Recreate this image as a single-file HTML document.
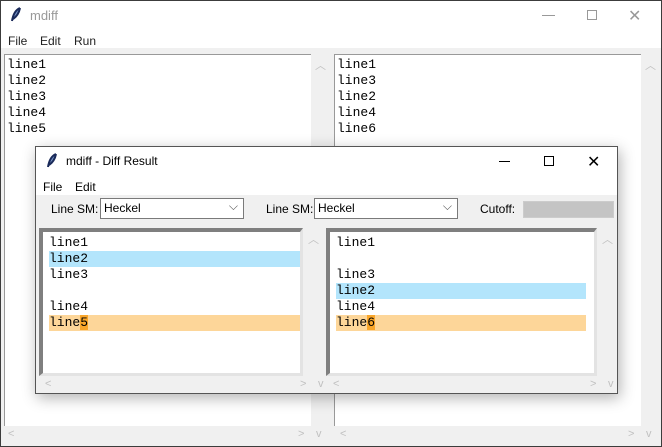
<!DOCTYPE html>
<html><head><style>
*{margin:0;padding:0;box-sizing:border-box}
body{width:662px;height:447px;overflow:hidden;background:#f0f0f0;font-family:"Liberation Sans",sans-serif;font-size:12px;position:relative}
.a{position:absolute}
.mono{font-family:"Liberation Mono",monospace;font-size:13px;line-height:16px;color:#000}
.arr{color:#c0c0c0;font-size:11px;position:absolute}
</style></head><body>
<div class="a" style="left:0;top:0;width:662px;height:447px;border:1px solid #3c3c3c"></div>
<div class="a" style="left:1;top:1px;left:1px;width:660px;height:47px;background:#fff"></div>
<svg class="a" style="left:10px;top:7px" width="12" height="16"><path d="M10 1 C5 3 3 8 2 14 M10 1 C9 6 6 10 3 12" stroke="#1a2a5a" stroke-width="2" fill="#6a8ac0"/></svg>
<div class="a" style="left:30px;top:8px;color:#999;font-size:13px">mdiff</div>
<div class="a" style="left:542px;top:15px;width:13px;height:1px;background:#999"></div>
<div class="a" style="left:587px;top:10px;width:10px;height:10px;border:1px solid #999"></div>
<div class="a" style="left:628px;top:6px;color:#999;font-size:16px">✕</div>
<div class="a" style="left:8px;top:34px;color:#222">File</div>
<div class="a" style="left:40px;top:34px;color:#222">Edit</div>
<div class="a" style="left:74px;top:34px;color:#222">Run</div>
<div class="a mono" style="left:4px;top:54px;width:307px;height:372px;background:#fff;border-top:1px solid #999;border-left:1px solid #999;padding:2px 2px">line1<br>line2<br>line3<br>line4<br>line5</div>
<div class="a mono" style="left:334px;top:54px;width:307px;height:372px;background:#fff;border-top:1px solid #999;border-left:1px solid #999;padding:2px 2px">line1<br>line3<br>line2<br>line4<br>line6</div>
<div class="arr" style="left:315px;top:57px">︿</div><div class="arr" style="left:645px;top:57px">︿</div>
<div class="arr" style="left:8px;top:428px">&lt;</div><div class="arr" style="left:298px;top:428px">&gt;</div><div class="arr" style="left:316px;top:428px">v</div>
<div class="arr" style="left:340px;top:428px">&lt;</div><div class="arr" style="left:628px;top:428px">&gt;</div><div class="arr" style="left:646px;top:428px">v</div>

<div class="a" style="left:35px;top:146px;width:583px;height:248px;background:#f0f0f0;border:1px solid #555;box-shadow:2px 4px 14px rgba(0,0,0,0.3)">
<div class="a" style="left:0;top:0;width:581px;height:48px;background:#fff"></div>
<svg class="a" style="left:10px;top:6px" width="12" height="16"><path d="M10 1 C5 3 3 8 2 14 M10 1 C9 6 6 10 3 12" stroke="#1a2a5a" stroke-width="2" fill="#6a8ac0"/></svg>
<div class="a" style="left:30px;top:7px;color:#000;font-size:12px">mdiff - Diff Result</div>
<div class="a" style="left:463px;top:14px;width:11px;height:1px;background:#000"></div>
<div class="a" style="left:508px;top:9px;width:10px;height:10px;border:1px solid #000"></div>
<div class="a" style="left:551px;top:5px;font-size:16px;color:#000">✕</div>
<div class="a" style="left:7px;top:33px">File</div><div class="a" style="left:39px;top:33px">Edit</div>
<div class="a" style="left:15px;top:55px">Line SM:</div>
<div class="a" style="left:64px;top:51px;width:144px;height:21px;background:#fff;border:1px solid #7a7a7a;padding:2px 3px">Heckel<span style="position:absolute;right:5px;top:0;color:#555">⌵</span></div>
<div class="a" style="left:230px;top:55px">Line SM:</div>
<div class="a" style="left:278px;top:51px;width:144px;height:21px;background:#fff;border:1px solid #7a7a7a;padding:2px 3px">Heckel<span style="position:absolute;right:5px;top:0;color:#555">⌵</span></div>
<div class="a" style="left:444px;top:55px">Cutoff:</div>
<div class="a" style="left:487px;top:54px;width:91px;height:17px;background:#c4c4c4;border:1px solid #ccc"></div>

<div class="a mono" style="left:3px;top:81px;width:264px;height:148px;background:#fff;border-style:solid;border-width:4px 3px 3px 4px;border-color:#7f7f7f #e3e3e3 #e3e3e3 #7f7f7f;padding:3px 0 0 6px">
line1<br><div style="background:#b3e5fc;width:251px">line2</div>line3<br><br>line4<br><div style="background:#fdd699;width:251px">line<span style="background:#f9a62b">5</span></div></div>
<div class="mono a" style="left:290px;top:81px;width:271px;height:148px;background:#fff;border-style:solid;border-width:4px 3px 3px 4px;border-color:#7f7f7f #e3e3e3 #e3e3e3 #7f7f7f;padding:3px 0 0 6px">
line1<br><br>line3<br><div style="background:#b3e5fc;width:250px">line2</div>line4<br><div style="background:#fdd699;width:250px">line<span style="background:#f9a62b">6</span></div></div>
<div class="arr" style="left:272px;top:84px">︿</div><div class="arr" style="left:566px;top:84px">︿</div>
<div class="arr" style="left:9px;top:231px">&lt;</div><div class="arr" style="left:264px;top:231px">&gt;</div><div class="arr" style="left:282px;top:231px">v</div>
<div class="arr" style="left:297px;top:231px">&lt;</div><div class="arr" style="left:554px;top:231px">&gt;</div><div class="arr" style="left:572px;top:231px">v</div>
</div>
</body></html>
